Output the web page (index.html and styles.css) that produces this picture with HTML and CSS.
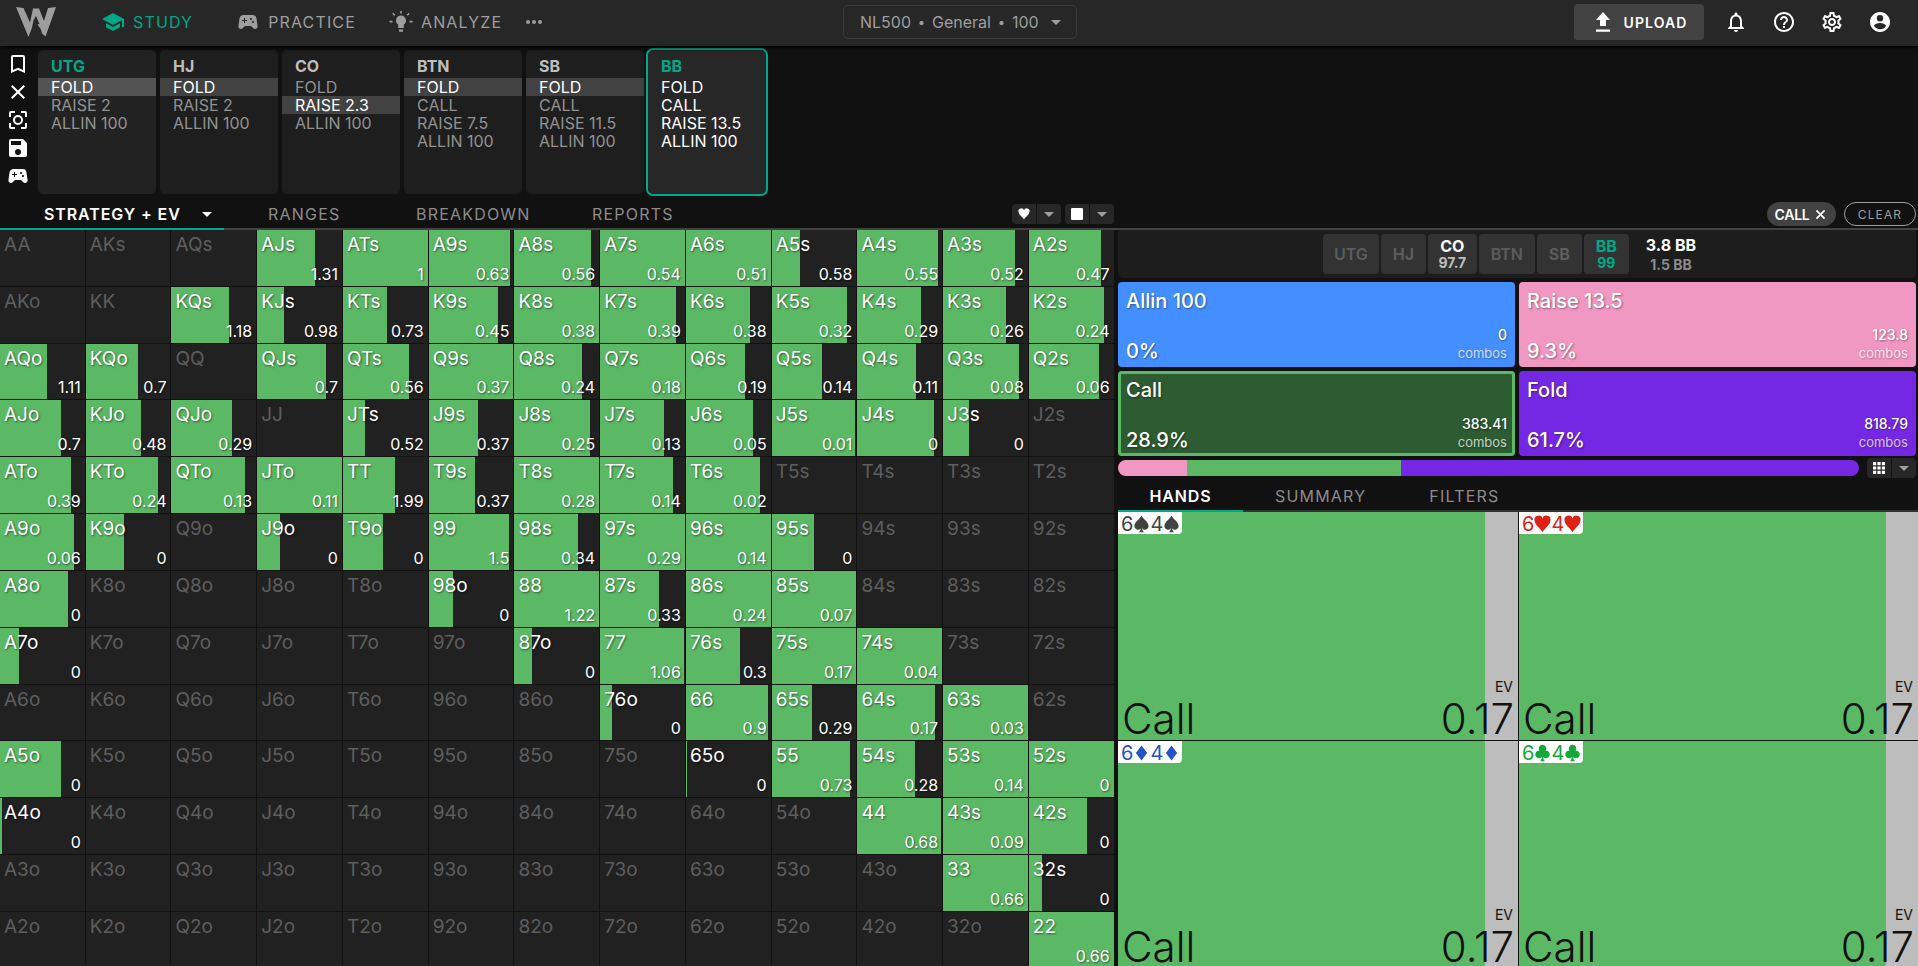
FILE: index.html
```html
<!DOCTYPE html>
<html lang="en">
<head>
  <meta charset="UTF-8">
  <title>Study</title>
  <link rel="stylesheet" href="styles.css">
</head>
<body>
<svg class="defs">
  <symbol id="pad" viewBox="0 0 24 24"><path d="M21.58 16.09l-1.09-7.66A3.996 3.996 0 0 0 16.53 5H7.47C5.48 5 3.79 6.46 3.51 8.43l-1.09 7.66C2.2 17.63 3.39 19 4.94 19c.68 0 1.32-.27 1.8-.75L9 16h6l2.25 2.25c.48.48 1.13.75 1.8.75 1.56 0 2.75-1.37 2.53-2.91zM11 11H9v2H8v-2H6v-1h2V8h1v2h2v1zm4-1c-.55 0-1-.45-1-1s.45-1 1-1 1 .45 1 1-.45 1-1 1zm2 3c-.55 0-1-.45-1-1s.45-1 1-1 1 .45 1 1-.45 1-1 1z"/></symbol>
  <symbol id="down" viewBox="0 0 10 5"><path d="M0 0h10L5 5z"/></symbol>
  <symbol id="close" viewBox="0 0 24 24"><path d="M19 6.41L17.59 5 12 10.59 6.41 5 5 6.41 10.59 12 5 17.59 6.41 19 12 13.41 17.59 19 19 17.59 13.41 12z"/></symbol>
</svg>

<header class="topbar">
  <svg class="logo" viewBox="0 0 40 31"><path d="M0 0l7.500 1 6.500 14.500L17 1.500h6L28 14l4-13 8-1-10.500 29.500-3.500-3-1-4-3.500-5 2-.5-3.500-8-2.500 4.500-1.500 7L12.500 30z"/></svg>
  <nav class="nav">
    <a class="nav-item active"><svg viewBox="0 0 24 24"><path d="M5 13.180v4L12 21l7-3.820v-4L12 17l-7-3.820zM12 3L1 9l11 6 9-4.910V17h2V9L12 3z"/></svg>STUDY</a>
    <a class="nav-item practice"><svg><use href="#pad"/></svg>PRACTICE</a>
    <a class="nav-item analyze"><svg viewBox="0 0 24 24"><path d="M12 5.500a5 5 0 0 0-2.800 9.100V18h5.600v-3.400A5 5 0 0 0 12 5.500zM10 19.500h4v2.300h-4zM11.200 1h1.600v2.500h-1.600zM0.500 10.800h3v1.600h-3zM20.500 10.800h3v1.600h-3zM3.200 3.800l1.100-1.100 2 2-1.100 1.100zM20.800 3.800l-1.100-1.100-2 2 1.100 1.100z"/></svg>ANALYZE</a>
    <a class="more"><i></i><i></i><i></i></a>
  </nav>
  <div class="format">NL500<span class="dot">•</span>General<span class="dot">•</span>100<svg class="arrow"><use href="#down"/></svg></div>
  <div class="tools">
    <button class="upload"><svg viewBox="0 0 24 24"><path d="M9 16h6v-6h4l-7-8-7 8h4zM5 19.500h14v2.200H5z"/></svg>UPLOAD</button>
    <svg viewBox="0 0 24 24"><path d="M12 22c1.100 0 2-.9 2-2h-4c0 1.100.9 2 2 2zm6-6v-5c0-3.070-1.630-5.640-4.500-6.320V4c0-.83-.67-1.500-1.500-1.500s-1.500.67-1.500 1.500v.68C7.640 5.360 6 7.920 6 11v5l-2 2v1h16v-1l-2-2zm-2 1H8v-6c0-2.480 1.510-4.500 4-4.500s4 2.020 4 4.500v6z"/></svg>
    <svg viewBox="0 0 24 24"><path d="M11 18h2v-2h-2v2zm1-16C6.480 2 2 6.480 2 12s4.480 10 10 10 10-4.480 10-10S17.520 2 12 2zm0 18c-4.410 0-8-3.590-8-8s3.590-8 8-8 8 3.590 8 8-3.590 8-8 8zm0-14c-2.210 0-4 1.790-4 4h2c0-1.100.9-2 2-2s2 .9 2 2c0 2-3 1.750-3 5h2c0-2.250 3-2.500 3-5 0-2.210-1.790-4-4-4z"/></svg>
    <svg viewBox="0 0 24 24"><path d="M19.430 12.980c.04-.32.07-.64.07-.98s-.03-.66-.07-.98l2.110-1.650c.19-.15.24-.42.12-.64l-2-3.460c-.12-.22-.39-.3-.61-.22l-2.490 1c-.52-.4-1.080-.73-1.690-.98l-.38-2.650A.488.488 0 0 0 14 2h-4c-.25 0-.46.18-.49.42l-.38 2.650c-.61.25-1.170.59-1.690.98l-2.490-1c-.23-.09-.49 0-.61.22l-2 3.460c-.13.22-.07.49.12.64l2.110 1.650c-.04.32-.07.65-.07.98s.03.66.07.98l-2.110 1.650c-.19.15-.24.42-.12.64l2 3.460c.12.22.39.3.61.22l2.490-1c.52.4 1.080.73 1.690.98l.38 2.650c.03.24.24.42.49.42h4c.25 0 .46-.18.49-.42l.38-2.650c.61-.25 1.170-.59 1.690-.98l2.490 1c.23.09.49 0 .61-.22l2-3.460c.12-.22.07-.49-.12-.64l-2.110-1.650zm-1.980-1.710c.04.31.05.52.05.73s-.02.43-.05.73l-.14 1.130.89.7 1.080.84-.7 1.210-1.270-.51-1.040-.42-.9.680c-.43.32-.84.56-1.250.73l-1.060.43-.16 1.130-.2 1.350h-1.400l-.35-2.480-1.060-.43c-.43-.18-.83-.41-1.230-.71l-.91-.7-1.060.43-1.270.51-.7-1.210 1.080-.84.89-.7-.14-1.130c-.03-.31-.05-.54-.05-.74s.02-.43.05-.73l.14-1.130-.89-.7-1.080-.84.7-1.210 1.270.51 1.040.42.9-.68c.43-.32.84-.56 1.250-.73l1.060-.43.16-1.130.2-1.350h1.390l.35 2.480 1.060.43c.43.18.83.41 1.230.71l.91.7 1.060-.43 1.270-.51.7 1.210-1.070.85-.89.7.14 1.130zM12 8c-2.210 0-4 1.790-4 4s1.790 4 4 4 4-1.790 4-4-1.790-4-4-4zm0 6c-1.100 0-2-.9-2-2s.9-2 2-2 2 .9 2 2-.9 2-2 2z"/></svg>
    <svg viewBox="0 0 24 24"><path d="M12 2C6.480 2 2 6.480 2 12s4.480 10 10 10 10-4.480 10-10S17.520 2 12 2zm0 3a3.200 3.200 0 1 1 0 6.400A3.200 3.200 0 0 1 12 5zm0 14.200c-2.500 0-4.700-1.300-6-3.200 0-2 4-3.100 6-3.100s6 1.100 6 3.100a7.200 7.200 0 0 1-6 3.200z"/></svg>
  </div>
</header>

<section class="history">
  <div class="side">
    <svg viewBox="0 0 24 24"><path d="M17 3H7a2 2 0 0 0-2 2v16l7-3 7 3V5a2 2 0 0 0-2-2zm0 15l-5-2.180L7 18V5h10z"/></svg>
    <svg><use href="#close"/></svg>
    <svg viewBox="0 0 24 24"><path d="M5 15H3v4a2 2 0 0 0 2 2h4v-2H5zM5 5h4V3H5a2 2 0 0 0-2 2v4h2zM19 3h-4v2h4v4h2V5a2 2 0 0 0-2-2zM19 19h-4v2h4a2 2 0 0 0 2-2v-4h-2zM12 7a5 5 0 1 0 0 10 5 5 0 0 0 0-10zm0 8a3 3 0 1 1 0-6 3 3 0 0 1 0 6z"/></svg>
    <svg viewBox="0 0 24 24"><path d="M17 3H5a2 2 0 0 0-2 2v14a2 2 0 0 0 2 2h14a2 2 0 0 0 2-2V7l-4-4zm-5 16a3 3 0 1 1 0-6 3 3 0 0 1 0 6zm3-10H5V5h10z"/></svg>
    <svg><use href="#pad"/></svg>
  </div>
  <div class="spot first"><h3>UTG</h3><p class="on">FOLD</p><p>RAISE 2</p><p>ALLIN 100</p></div>
  <div class="spot"><h3>HJ</h3><p class="on">FOLD</p><p>RAISE 2</p><p>ALLIN 100</p></div>
  <div class="spot"><h3>CO</h3><p>FOLD</p><p class="on">RAISE 2.3</p><p>ALLIN 100</p></div>
  <div class="spot"><h3>BTN</h3><p class="on">FOLD</p><p>CALL</p><p>RAISE 7.5</p><p>ALLIN 100</p></div>
  <div class="spot"><h3>SB</h3><p class="on">FOLD</p><p>CALL</p><p>RAISE 11.5</p><p>ALLIN 100</p></div>
  <div class="spot current"><h3>BB</h3><p>FOLD</p><p>CALL</p><p>RAISE 13.5</p><p>ALLIN 100</p></div>
</section>

<div class="tabs">
  <div class="tabs-left">
    <a class="tab selected strategy">STRATEGY + EV<svg class="arrow"><use href="#down"/></svg></a>
    <a class="tab ranges">RANGES</a>
    <a class="tab breakdown">BREAKDOWN</a>
    <a class="tab reports">REPORTS</a>
  </div>
  <div class="split"><span><svg viewBox="0 0 24 24"><path d="M12 23C9 17.500 1 13.500 1 7.500A5.600 5.600 0 0 1 12 5a5.600 5.600 0 0 1 11 2.500C23 13.500 15 17.500 12 23z"/></svg></span><span><svg class="arrow"><use href="#down"/></svg></span></div>
  <div class="split"><span><b class="square"></b></span><span><svg class="arrow"><use href="#down"/></svg></span></div>
  <div class="filters">
    <a class="chip">CALL<svg><use href="#close"/></svg></a>
    <a class="chip clear">CLEAR</a>
  </div>
</div>

<main class="main">
  <div class="matrix" id="matrix"></div>

  <aside class="panel">
    <div class="players">
      <span class="player wide">UTG</span>
      <span class="player">HJ</span>
      <span class="player in">CO<small>97.7</small></span>
      <span class="player wide">BTN</span>
      <span class="player">SB</span>
      <span class="player hero">BB<small>99</small></span>
      <span class="pot">3.8 BB<small>1.5 BB</small></span>
    </div>
    <div class="actions">
      <div class="action allin"><h4>Allin 100</h4><strong>0%</strong><em>0<small>combos</small></em></div>
      <div class="action raise"><h4>Raise 13.5</h4><strong>9.3%</strong><em>123.8<small>combos</small></em></div>
      <div class="action call"><h4>Call</h4><strong>28.9%</strong><em>383.41<small>combos</small></em></div>
      <div class="action fold"><h4>Fold</h4><strong>61.7%</strong><em>818.79<small>combos</small></em></div>
    </div>
    <div class="total">
      <div class="bar"><i class="raise" style="width:9.3%"></i><i class="call-bg" style="width:28.9%"></i><i class="fold" style="width:61.8%"></i></div>
      <div class="split"><span><svg viewBox="0 0 12 12"><path d="M0 0h3.200v3.200H0zM4.400 0h3.200v3.200H4.400zM8.800 0H12v3.200H8.800zM0 4.400h3.200v3.200H0zM4.400 4.400h3.200v3.200H4.400zM8.800 4.400H12v3.200H8.800zM0 8.800h3.200V12H0zM4.400 8.800h3.200V12H4.400zM8.800 8.800H12V12H8.800z"/></svg></span><span><svg class="arrow"><use href="#down"/></svg></span></div>
    </div>
    <div class="subtabs">
      <a class="tab selected hands-tab">HANDS</a>
      <a class="tab summary-tab">SUMMARY</a>
      <a class="tab filters-tab">FILTERS</a>
    </div>
    <div class="hands" id="hands"></div>
  </aside>
</main>

<script>
	var ranks = "AKQJT98765432";
	// hand: [EV, % of the hand that calls]
	var calls = {
		AJs: ["1.31", 67.8], ATs: ["1", 100], A9s: ["0.63", 95.8], A8s: ["0.56", 90.3], A7s: ["0.54", 100], A6s: ["0.51", 100], A5s: ["0.58", 34], A4s: ["0.55", 95], A3s: ["0.52", 84.6], A2s: ["0.47", 84.6],
		KQs: ["1.18", 68], KJs: ["0.98", 31.5], KTs: ["0.73", 52], K9s: ["0.45", 81.5], K8s: ["0.38", 100], K7s: ["0.39", 89.7], K6s: ["0.38", 75.3], K5s: ["0.32", 88.5], K4s: ["0.29", 75.3], K3s: ["0.26", 74.4], K2s: ["0.24", 88.3],
		AQo: ["1.11", 55.6], KQo: ["0.7", 61.9], QJs: ["0.7", 80.8], QTs: ["0.56", 77.7], Q9s: ["0.37", 99.2], Q8s: ["0.24", 80.2], Q7s: ["0.18", 100], Q6s: ["0.19", 69.2], Q5s: ["0.14", 59.7], Q4s: ["0.11", 69.4], Q3s: ["0.08", 89.2], Q2s: ["0.06", 82.5],
		AJo: ["0.7", 71.8], KJo: ["0.48", 64.7], QJo: ["0.29", 71.6], JTs: ["0.52", 26], J9s: ["0.37", 58], J8s: ["0.25", 89.2], J7s: ["0.13", 75.3], J6s: ["0.05", 79.7], J5s: ["0.01", 98.2], J4s: ["0", 90.4], J3s: ["0", 30.5],
		ATo: ["0.39", 83.6], KTo: ["0.24", 85.5], QTo: ["0.13", 87], JTo: ["0.11", 100], TT: ["1.99", 61.2], T9s: ["0.37", 54.4], T8s: ["0.28", 100], T7s: ["0.14", 85.8], T6s: ["0.02", 87],
		A9o: ["0.06", 87], K9o: ["0", 45.6], J9o: ["0", 27], T9o: ["0", 47.2], "99": ["1.5", 94.6], "98s": ["0.34", 74.8], "97s": ["0.29", 100], "96s": ["0.14", 100], "95s": ["0", 50.2],
		A8o: ["0", 79.8], "98o": ["0", 28.3], "88": ["1.22", 100], "87s": ["0.33", 69.4], "86s": ["0.24", 100], "85s": ["0.07", 100],
		A7o: ["0", 22.3], "87o": ["0", 20.2], "77": ["1.06", 99], "76s": ["0.3", 63.4], "75s": ["0.17", 100], "74s": ["0.04", 100],
		"76o": ["0", 14.2], "66": ["0.9", 96.3], "65s": ["0.29", 48], "64s": ["0.17", 91.6], "63s": ["0.03", 100],
		A5o: ["0", 71.8], "65o": ["0", 1.3], "55": ["0.73", 93], "54s": ["0.28", 68], "53s": ["0.14", 100], "52s": ["0", 100],
		A4o: ["0", 2.2], "44": ["0.68", 98.8], "43s": ["0.09", 100], "42s": ["0", 68.6],
		"33": ["0.66", 100], "32s": ["0", 15.4], "22": ["0.66", 100]
	};
	var html = "";
	for (var r = 0; r < 13; r++)
	{
		for (var c = 0; c < 13; c++)
		{
			var name = ranks[r] + ranks[c];
			if (c > r) name = ranks[r] + ranks[c] + "s";
			if (c < r) name = ranks[c] + ranks[r] + "o";
			var hand = calls[name];
			if (hand)
				html += '<div class="cell played"><div class="fill" style="width:' + hand[1] + '%"></div><span>' + name + '</span><b>' + hand[0] + '</b></div>';
			else
				html += '<div class="cell"><span>' + name + '</span></div>';
		}
	}
	document.getElementById("matrix").innerHTML = html;

	var suits = {
		spade: "M12 1C9 6 2.500 9.500 2.500 15a4.700 4.700 0 0 0 8.500 2.800c0 2.200-.8 4-2.500 5.200h7c-1.700-1.200-2.500-3-2.500-5.200A4.700 4.700 0 0 0 21.500 15C21.500 9.500 15 6 12 1z",
		heart: "M12 23C9 17 1.500 13 1.500 7.500A5.300 5.300 0 0 1 12 5a5.300 5.300 0 0 1 10.500 2.500C22.500 13 15 17 12 23z",
		diamond: "M12 2l7.500 10L12 22 4.500 12z",
		club: "M12 1a5 5 0 0 0-4 8A5 5 0 1 0 11 17.300c0 2.300-.8 4.500-2.500 5.700h7c-1.700-1.200-2.500-3.400-2.500-5.700A5 5 0 1 0 16 9a5 5 0 0 0-4-8z"
	};
	html = "";
	for (var suit in suits)
	{
		var icon = '<svg viewBox="0 0 24 24"><path d="' + suits[suit] + '"/></svg>';
		html += '<div class="hand"><div class="cards ' + suit + '">6' + icon + '4' + icon + '</div>' +
			'<small>EV</small><div class="result"><span>Call</span><span>0.17</span></div></div>';
	}
	document.getElementById("hands").innerHTML = html;
</script>
</body>
</html>
```
FILE: styles.css
```css
* {
	box-sizing: border-box;
}
body {
	margin: 0;
	width: 100vw;
	height: 100vh;
	overflow: hidden;
	display: flex;
	flex-direction: column;
	background: #111;
	color: #fff;
	font-family: Inter, "Liberation Sans", sans-serif;
}
svg {
	fill: currentColor;
	flex: none;
}
h3, h4, p {
	margin: 0;
}
.defs {
	display: none;
}
.arrow {
	width: 10px;
	height: 5px;
}

/* top bar */
.topbar {
	flex: none;
	height: 46px;
	display: flex;
	align-items: center;
	background: #272727;
	color: #9e9e9e;
	box-shadow: 0 1px 5px #000;
	padding: 0 16px;
	z-index: 1;
}
.logo {
	width: 40px;
	height: 31px;
	margin-top: -1px;
}
.nav {
	display: flex;
	align-items: center;
	width: 787px;
	padding-left: 45px;
}
.nav-item {
	display: flex;
	align-items: center;
	height: 44px;
	margin-top: -2px;
	font-size: 16px;
	letter-spacing: 1.15px;
	white-space: nowrap;
}
.nav-item svg {
	width: 24px;
	height: 24px;
	margin-right: 8px;
}
.nav-item.active {
	color: #00a887;
}
.practice {
	margin-left: 43px;
}
.analyze {
	margin-left: 33px;
}
.more {
	display: flex;
	gap: 2px;
	margin: -2px 0 0 24px;
}
.more i {
	width: 4px;
	height: 4px;
	border-radius: 50%;
	background: #9e9e9e;
}
.format {
	width: 234px;
	height: 34px;
	display: flex;
	align-items: center;
	margin-top: -2px;
	padding-left: 16px;
	border: 1px solid #3b3b3b;
	border-radius: 5px;
	font-size: 16px;
	white-space: nowrap;
}
.format .dot {
	width: 21px;
	font-size: 13px;
	text-align: center;
}
.format .arrow {
	margin-left: 12px;
}
.tools {
	margin-left: auto;
	display: flex;
	align-items: center;
	gap: 24px;
	margin-top: -2px;
	padding-right: 10px;
	color: #fff;
}
.tools svg {
	width: 24px;
	height: 24px;
}
.upload {
	width: 130px;
	height: 36px;
	display: flex;
	align-items: center;
	justify-content: center;
	gap: 9px;
	border: 0;
	border-radius: 4px;
	background: #424242;
	color: #fff;
	font: 600 14px Inter, sans-serif;
	letter-spacing: 1.1px;
	margin-right: -4px;
}

/* betting history */
.history {
	flex: none;
	height: 154px;
	display: flex;
	gap: 4px;
	padding-top: 4px;
}
.side {
	width: 34px;
	display: flex;
	flex-direction: column;
	align-items: center;
	gap: 4px;
	padding-top: 2px;
}
.side svg {
	width: 24px;
	height: 24px;
	margin-left: 2px;
}
.spot {
	width: 118px;
	height: 144px;
	padding-top: 7px;
	border-radius: 5px;
	background: #1e1e1e;
	color: #929292;
}
.spot h3 {
	padding-left: 13px;
	font-size: 16px;
	line-height: 19px;
	font-weight: 700;
	margin-bottom: 2px;
	color: #bdbdbd;
}
.spot p {
	height: 18px;
	padding-left: 13px;
	font-size: 16px;
	line-height: 19px;
}
.spot .on {
	background: #424242;
	color: #fff;
}
.spot.first {
	background: #222;
}
.first .on {
	background: #535353;
}
.spot.first h3, .spot.current h3 {
	color: #00a887;
}
.spot.current {
	background: #272727;
	outline: 2px solid #00a887;
	color: #fff;
}

/* tabs */
.tabs {
	flex: none;
	height: 30px;
	display: flex;
	align-items: center;
	padding: 0 2px 2px 0;
	box-shadow: inset 0 -2px #424242;
}
.tabs-left {
	display: flex;
	width: 1012px;
	align-self: stretch;
}
.tab {
	display: flex;
	align-items: center;
	color: #8c8c8c;
	font-size: 16px;
	letter-spacing: 1.2px;
	white-space: nowrap;
}
.tab.selected {
	color: #fff;
	font-weight: 600;
	letter-spacing: .9px;
	box-shadow: 0 2px #00a887;
}
.strategy {
	width: 224px;
	padding-left: 44px;
}
.strategy .arrow {
	margin-left: 21px;
}
.ranges {
	width: 148px;
	padding-left: 44px;
}
.breakdown {
	width: 176px;
	padding-left: 44px;
}
.reports {
	padding-left: 44px;
}
.split {
	width: 49px;
	height: 20px;
	display: flex;
	margin-right: 4px;
	border-radius: 4px;
	background: #272727;
	overflow: hidden;
}
.split span {
	flex: 1;
	display: flex;
	align-items: center;
	justify-content: center;
}
.split span + span {
	border-left: 1px solid #111;
	color: #9e9e9e;
}
.split svg:not(.arrow) {
	width: 12px;
	height: 12px;
}
.square {
	width: 12px;
	height: 12px;
	border-radius: 1px;
	background: #fff;
}
.filters {
	margin-left: auto;
	display: flex;
	gap: 8px;
}
.chip {
	width: 69px;
	height: 24px;
	display: flex;
	align-items: center;
	justify-content: center;
	gap: 4px;
	border-radius: 12px;
	background: #424242;
	font-size: 14px;
	font-weight: 600;
	letter-spacing: -.3px;
}
.chip svg {
	width: 15px;
	height: 15px;
	stroke: currentColor;
}
.chip.clear {
	width: 72px;
	border: 1px solid #9e9e9e;
	background: none;
	color: #9e9e9e;
	font-size: 12px;
	font-weight: 400;
	letter-spacing: 1.1px;
}

/* hand matrix */
.main {
	flex: 1;
	min-height: 0;
	display: flex;
}
.matrix {
	flex: none;
	width: 1114.6px;
	height: 738.6px;
	display: grid;
	grid-template-columns: repeat(13, 1fr);
	grid-template-rows: repeat(13, 1fr);
}
.cell {
	position: relative;
	display: flex;
	flex-direction: column;
	justify-content: space-between;
	border-right: 1px solid #111;
	border-bottom: 1px solid #111;
	padding: 4px 4px 1px 4px;
	background: #212121;
	color: #5e5e5e;
	font-size: 19px;
	line-height: 22px;
}
.cell.played {
	color: #fff;
	text-shadow: 1px 1px 2px rgba(0, 0, 0, .5);
}
.cell span, .cell b {
	position: relative;
}
.cell b {
	align-self: flex-end;
	font-size: 16px;
	font-weight: 400;
}
.fill {
	position: absolute;
	left: 0;
	top: 0;
	height: 100%;
	background: #5bb966;
}

/* right panel */
.panel {
	flex: none;
	width: 800px;
	margin-left: 3.4px;
}
.players {
	height: 48px;
	display: flex;
	justify-content: center;
	gap: 2px;
	margin-right: 2px;
	padding: 4px 15px 4px 0;
	border-radius: 0 0 5px 5px;
	background: #1d1d1d;
}
.player, .pot {
	display: flex;
	flex-direction: column;
	align-items: center;
	justify-content: center;
	font-size: 16px;
	line-height: 18px;
	font-weight: 700;
}
.player {
	width: 45px;
	border-radius: 4px;
	background: #333;
	color: #5c5c5c;
}
.player.wide {
	width: 56px;
	font-weight: 600;
}
.player small, .pot small {
	font-size: 14px;
	line-height: 16px;
	color: #bdbdbd;
}
.player.in {
	width: 49px;
	color: #fff;
}
.player.hero, .player.hero small {
	color: #00a887;
}
.pot {
	margin-left: 15px;
}
.pot small {
	margin-top: 3px;
	color: #8c8c8c;
}
.actions {
	display: grid;
	grid-template-columns: 1fr 1fr;
	grid-auto-rows: 85px;
	gap: 4px;
	padding: 4px 2px 4px 0;
}
.action {
	display: grid;
	grid-template-columns: 1fr auto;
	align-content: space-between;
	align-items: end;
	padding: 6px 8px 3px;
	border-radius: 4px;
	font-size: 20px;
	line-height: 26px;
	text-shadow: 1px 1px 2px rgba(0, 0, 0, .4);
}
.action h4 {
	grid-column: 1 / 3;
	font-size: 20px;
	font-weight: 500;
}
.action strong {
	font-weight: 500;
}
.action em {
	padding-bottom: 2px;
	font-size: 14px;
	font-style: normal;
	font-weight: 500;
	line-height: 19px;
	text-align: right;
}
.action small {
	display: block;
	font-size: 13px;
	font-weight: 400;
	line-height: 18px;
	opacity: .7;
}
.allin {
	background: #448fff;
}
.raise {
	background: #f198c2;
}
.call {
	background: #2d5b32;
	box-shadow: inset 0 0 0 3px #5bb966;
}
.fold {
	background: #7528e4;
}
.call-bg {
	background: #5bb966;
}
.total {
	display: flex;
	align-items: center;
	justify-content: space-between;
	height: 16px;
	padding-right: 2px;
}
.total .split {
	margin-right: 0;
}
.bar {
	display: flex;
	width: 741px;
	height: 16px;
	border-radius: 8px;
	overflow: hidden;
}
.subtabs {
	display: flex;
	height: 36px;
	padding: 5px 0 2px;
	box-shadow: inset 0 -2px #333;
}
.hands-tab {
	width: 125px;
	justify-content: center;
}
.summary-tab {
	margin-left: 32px;
}
.filters-tab {
	margin-left: 63px;
}
.hands {
	display: grid;
	grid-template-columns: 400px 399px;
	grid-template-rows: 229px 228px;
	column-gap: 1px;
}
.hand {
	display: flex;
	flex-direction: column;
	border-bottom: 1px solid #111;
	background: linear-gradient(to right, #5bb966 367px, #bdbdbd 367px);
	color: #111;
}
.cards {
	align-self: flex-start;
	display: flex;
	align-items: center;
	height: 22px;
	padding: 1px 2px 0 3px;
	border-radius: 0 0 4px 0;
	background: #fff;
	font-size: 20px;
}
.cards svg {
	width: 19px;
	height: 18px;
	margin: 0 -1px;
}
.spade {
	color: #424242;
}
.heart {
	color: #dd2316;
}
.diamond {
	color: #2753c6;
}
.club {
	color: #14a83a;
}
.hand small {
	margin-top: auto;
	padding-right: 5px;
	font-size: 14px;
	line-height: 16px;
	text-align: right;
}
.result {
	display: flex;
	justify-content: space-between;
	padding: 4px 4px 2px 4px;
	font-size: 42px;
	line-height: 39px;
	font-weight: 300;
}
```
